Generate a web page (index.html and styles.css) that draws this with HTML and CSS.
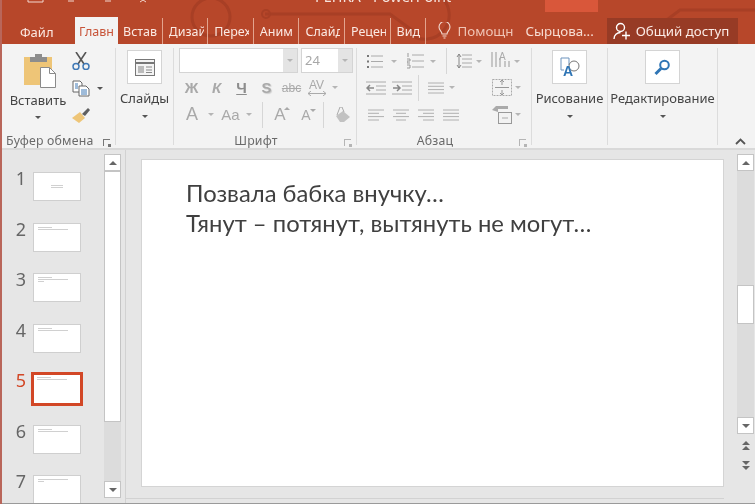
FILE: index.html
```html
<!DOCTYPE html>
<html lang="ru">
<head>
  <meta charset="UTF-8">
  <title>РЕПКА - PowerPoint</title>
  <link rel="stylesheet" href="styles.css">
</head>
<body>
  <svg class="defs" width="0" height="0">
    <symbol id="lines" viewBox="0 0 16 12"><path d="M0 1h16M0 4.300h16M0 7.600h16M0 11h16" stroke="currentColor" fill="none"/></symbol>
    <symbol id="lines-left" viewBox="0 0 16 12"><path d="M0 1h16M0 4.300h11M0 7.600h16M0 11h11" stroke="currentColor" fill="none"/></symbol>
    <symbol id="lines-center" viewBox="0 0 16 12"><path d="M0 1h16M3 4.300h10M0 7.600h16M3 11h10" stroke="currentColor" fill="none"/></symbol>
    <symbol id="lines-right" viewBox="0 0 16 12"><path d="M0 1h16M5 4.300h11M0 7.600h16M5 11h11" stroke="currentColor" fill="none"/></symbol>
  </svg>

  <div class="app">
    <header class="titlebar">
      <svg class="title-art" width="755" height="44" viewBox="0 0 755 44">
        <circle cx="211" cy="17" r="19" fill="none" stroke="#a83f25" stroke-width="3"/>
        <path d="M265 14h125l30 22M440 -4a20 20 0 0 1 -30 38M640 40l40-30h75" fill="none" stroke="#a83f25" stroke-width="3"/>
        <circle cx="266" cy="14" r="4" fill="none" stroke="#a83f25" stroke-width="2"/>
        <path d="M28 0v2h15V0M68 1h6M105 1h6M140 2l3-2 3 2" fill="none" stroke="#f3d9d0"/>
      </svg>
      <span class="title-text">РЕПКА - PowerPoint</span>
      <span class="title-close"></span>
    </header>

    <nav class="tabs">
      <span class="tab-file">Файл</span>
      <span class="tab-active">Главн</span>
      <span class="tab"><span>Встав</span></span>
      <span class="tab"><span>Дизай</span></span>
      <span class="tab"><span>Перех</span></span>
      <span class="tab"><span>Аним</span></span>
      <span class="tab"><span>Слайд</span></span>
      <span class="tab"><span>Рецен</span></span>
      <span class="tab tab-short"><span>Вид</span></span>
      <span class="tab-help">
        <svg width="13" height="17" viewBox="0 0 13 17"><path d="M4 12c0-3-3-3.500-3-7a5.500 5.500 0 0 1 11 0c0 3.500-3 4-3 7zM4.500 14h4M5.500 16h2" fill="none" stroke="#f3d9d0" stroke-width="1.100"/></svg>
        Помощн
      </span>
      <span class="tab-user">Сырцова...</span>
      <span class="tab-share">
        <svg width="18" height="18" viewBox="0 0 18 18"><circle cx="7.500" cy="5.500" r="4" fill="none" stroke="#fff" stroke-width="1.400"/><path d="M1 17c0-4 3-6.500 6.500-6.500M9 13.500h8M13 9.500v8" fill="none" stroke="#fff" stroke-width="1.400"/></svg>
        Общий доступ
      </span>
    </nav>

    <section class="ribbon">
      <div class="group group-clipboard">
        <div class="group-body clipboard">
          <div class="paste">
            <svg class="paste-icon" width="32" height="34" viewBox="0 0 32 34">
              <rect x="0" y="3" width="28" height="28" fill="#eec577"/>
              <rect x="6" y="3" width="17" height="5" fill="#8d8d8d"/>
              <rect x="11" y="0" width="7" height="4" fill="#8d8d8d"/>
              <path d="M16.500 13.500h9l6 6v14h-15z" fill="#fff" stroke="#8a8a8a"/>
              <path d="M25.500 13.500v6h6" fill="none" stroke="#8a8a8a"/>
            </svg>
            <span class="big-label">Вставить</span>
            <i class="caret caret-dark"></i>
          </div>
          <div class="clip-tools">
            <svg width="18" height="18" viewBox="0 0 18 18"><path d="M4 0l8 12M14 0L6 12" stroke="#555" stroke-width="1.600"/><circle cx="4" cy="14.500" r="3" fill="none" stroke="#3f78b5" stroke-width="1.500"/><circle cx="14" cy="14.500" r="3" fill="none" stroke="#3f78b5" stroke-width="1.500"/></svg>
            <span class="clip-copy">
              <svg width="18" height="17" viewBox="0 0 18 17"><path d="M1 1h7l2 2v9H1z" fill="#fff" stroke="#666"/><path d="M7 6h7l3 3v7H7z" fill="#fff" stroke="#666"/><path d="M9 10h6M9 12h6M9 14h6M3 4h3M3 6h3M3 8h3" stroke="#3f78b5"/></svg>
              <i class="caret caret-dark"></i>
            </span>
            <svg width="19" height="17" viewBox="0 0 19 17"><path d="M0 11l8-6 5 6-6 5z" fill="#eec577"/><path d="M10 7l6-6 2 2-5 6z" fill="#5f5f5f"/></svg>
          </div>
        </div>
        <div class="group-label">Буфер обмена<i class="launcher"></i></div>
      </div>

      <div class="group group-slides">
        <div class="group-body big-tool">
          <span class="big-box">
            <svg width="20" height="17" viewBox="0 0 20 17"><rect x=".5" y=".5" width="19" height="16" fill="#f4f4f4" stroke="#777"/><path d="M0 4h20" stroke="#777" stroke-width="2"/><rect x="3" y="7" width="6" height="7" fill="#bbb"/><path d="M11 8h6M11 11h6M11 13.500h6" stroke="#888"/></svg>
          </span>
          <span class="big-label">Слайды</span>
          <i class="caret caret-dark"></i>
        </div>
        <div class="group-label"></div>
      </div>

      <div class="group group-font">
        <div class="group-body font-tools">
          <div class="font-inputs">
            <span class="combo combo-name"><i class="combo-arrow"><i class="caret"></i></i></span>
            <span class="combo combo-size"><b>24</b><i class="combo-arrow"><i class="caret"></i></i></span>
          </div>
          <div class="tool-row font-row-a">
            <b class="fmt fmt-w">Ж</b>
            <b class="fmt fmt-w fmt-i">К</b>
            <b class="fmt fmt-w fmt-u">Ч</b>
            <b class="fmt fmt-w fmt-s">S</b>
            <span class="fmt fmt-w fmt-abc">abc</span>
            <span class="fmt fmt-w fmt-av">AV<svg width="20" height="5" viewBox="0 0 20 5"><path d="M1 2.500h18M4 0L1 2.500 4 5M16 0l3 2.500L16 5" fill="none" stroke="#aaa"/></svg></span>
            <i class="caret ml-3"></i>
          </div>
          <div class="tool-row font-row-b">
            <span class="fmt fmt-big">A</span>
            <i class="caret ml-3"></i>
            <span class="fmt fmt-aa">Aa</span>
            <i class="caret ml-6"></i>
            <i class="sep ml-10"></i>
            <span class="fmt fmt-grow">A</span>
            <span class="fmt fmt-shrink">A</span>
            <i class="sep ml-10"></i>
            <svg class="ml-10" width="17" height="16" viewBox="0 0 17 16"><path d="M2 9l7-5 7 6-6 5H6z" fill="#c2c2c2"/><path d="M3 8L6 0h2l2 5" fill="none" stroke="#aaa"/></svg>
          </div>
        </div>
        <div class="group-label group-label-shift">Шрифт<i class="launcher launcher-light"></i></div>
      </div>

      <div class="group group-para">
        <div class="group-body para-tools">
          <div class="tool-row para-row-a">
            <svg class="ml-1" width="16" height="15" viewBox="0 0 16 15"><path d="M4 2h12M4 7.500h12M4 13h12" stroke="#aaa"/><path d="M0 2h2M0 7.500h2M0 13h2" stroke="#777" stroke-width="2"/></svg>
            <i class="caret ml-8"></i>
            <svg class="ml-10" width="17" height="16" viewBox="0 0 17 16"><path d="M5 2h12M5 8h12M5 14h12" stroke="#aaa"/><path d="M1 0v4M0 6h3v2H0v2h3M0 12h3v3H0" fill="none" stroke="#999"/></svg>
            <i class="caret ml-6"></i>
            <i class="sep ml-10"></i>
            <svg class="ml-9" width="16" height="16" viewBox="0 0 16 16"><path d="M6 2h10M6 6h10M6 10h10M6 14h10" stroke="#aaa"/><path d="M3 1v14M1 4l2-3 2 3M1 12l2 3 2-3" fill="none" stroke="#888"/></svg>
            <i class="caret ml-4"></i>
            <svg class="ml-9" width="20" height="18" viewBox="0 0 20 18"><path d="M1 0v15M5 0v15M9 6v9M14 9v6M18 9v6" stroke="#999"/><text x="8" y="8" font-size="10" fill="#aaa" font-family="Liberation Sans">A</text></svg>
            <i class="caret ml-3"></i>
          </div>
          <div class="tool-row para-row-b">
            <svg width="20" height="14" viewBox="0 0 20 14"><path d="M0 1h20M10 5h10M10 9h10M0 13h20" stroke="#aaa"/><path d="M8 7H1M4 4L1 7l3 3" fill="none" stroke="#888" stroke-width="1.500"/></svg>
            <svg class="ml-6" width="20" height="14" viewBox="0 0 20 14"><path d="M0 1h20M10 5h10M10 9h10M0 13h20" stroke="#aaa"/><path d="M1 7h7M5 4l3 3-3 3" fill="none" stroke="#888" stroke-width="1.500"/></svg>
            <i class="sep ml-6"></i>
            <svg class="ml-9" width="16" height="12"><use href="#lines"/></svg>
            <i class="caret ml-5"></i>
            <svg class="ml-37" width="20" height="19" viewBox="0 0 20 19"><rect x=".5" y="1.500" width="19" height="16" fill="none" stroke="#aaa" stroke-dasharray="2 1"/><path d="M10 2v5M8 4l2-2 2 2M10 17v-5M8 15l2 2 2-2M3 9.500h14" fill="none" stroke="#999"/></svg>
            <i class="caret ml-3"></i>
          </div>
          <div class="tool-row para-row-c">
            <svg class="ml-2" width="16" height="12"><use href="#lines-left"/></svg>
            <svg class="ml-9" width="16" height="12"><use href="#lines-center"/></svg>
            <svg class="ml-9" width="16" height="12"><use href="#lines-right"/></svg>
            <svg class="ml-9" width="16" height="12"><use href="#lines"/></svg>
            <svg class="ml-33" width="20" height="19" viewBox="0 0 20 19"><path d="M0 5l4-4h12v3H6v3z" fill="#aaa"/><rect x="6.500" y="7.500" width="13" height="11" fill="#f2f2f2" stroke="#999"/><path d="M10 13h6" stroke="#aaa"/></svg>
            <i class="caret ml-3"></i>
          </div>
        </div>
        <div class="group-label group-label-shift">Абзац<i class="launcher launcher-light"></i></div>
      </div>

      <div class="group group-draw">
        <div class="group-body big-tool">
          <span class="big-box">
            <svg width="20" height="20" viewBox="0 0 20 20"><path d="M9 8V1H1v12h3" fill="none" stroke="#6d93bd"/><circle cx="14" cy="9" r="5" fill="none" stroke="#777"/><text x="3" y="19" font-size="14" font-weight="bold" fill="#2f75b5" font-family="Liberation Sans">A</text></svg>
          </span>
          <span class="big-label">Рисование</span>
          <i class="caret caret-dark"></i>
        </div>
        <div class="group-label"></div>
      </div>

      <div class="group group-edit">
        <div class="group-body big-tool">
          <span class="big-box">
            <svg width="17" height="17" viewBox="0 0 17 17"><circle cx="10.500" cy="6" r="4.300" fill="none" stroke="#2f75b5" stroke-width="2"/><path d="M7 9.500L1.500 15" stroke="#2f75b5" stroke-width="3"/></svg>
          </span>
          <span class="big-label">Редактирование</span>
          <i class="caret caret-dark"></i>
        </div>
        <div class="group-label"></div>
      </div>

      <div class="group-collapse">
        <svg width="11" height="7" viewBox="0 0 11 7"><path d="M1 6l4.500-4.500L10 6" fill="none" stroke="#555" stroke-width="1.800"/></svg>
      </div>
    </section>

    <main class="workspace">
      <aside class="thumbs">
        <div class="thumb-list">
          <div class="thumb-row"><span class="thumb-num">1</span><div class="thumb thumb-title"><i></i><i></i></div></div>
          <div class="thumb-row"><span class="thumb-num">2</span><div class="thumb"><i class="s"></i><i></i></div></div>
          <div class="thumb-row"><span class="thumb-num">3</span><div class="thumb"><i class="s"></i><i></i><i class="xs"></i></div></div>
          <div class="thumb-row"><span class="thumb-num">4</span><div class="thumb"><i class="s"></i><i></i></div></div>
          <div class="thumb-row thumb-current"><span class="thumb-num">5</span><div class="thumb"><i class="s"></i><i></i></div></div>
          <div class="thumb-row"><span class="thumb-num">6</span><div class="thumb"><i class="s"></i><i></i></div></div>
          <div class="thumb-row"><span class="thumb-num">7</span><div class="thumb"><i></i><i class="xs"></i></div></div>
        </div>
        <div class="scrollbar scrollbar-left">
          <span class="sb-btn"><i class="arrow-up"></i></span>
          <span class="sb-thumb"></span>
          <span class="sb-track"></span>
          <span class="sb-btn"><i class="arrow-down"></i></span>
        </div>
      </aside>

      <section class="editor">
        <div class="slide">
          <p>Позвала бабка внучку…</p>
          <p>Тянут – потянут, вытянуть не могут…</p>
        </div>
      </section>

      <div class="scrollbar scrollbar-right">
        <span class="sb-btn"><i class="arrow-up"></i></span>
        <span class="sb-track sb-track-top"></span>
        <span class="sb-thumb"></span>
        <span class="sb-track sb-track-bottom"></span>
        <span class="sb-btn"><i class="arrow-down"></i></span>
        <span class="sb-page"><i class="arrow-up"></i><i class="arrow-up"></i></span>
        <span class="sb-page"><i class="arrow-down"></i><i class="arrow-down"></i></span>
      </div>
    </main>
  </div>
</body>
</html>
```

FILE: styles.css
```css
* {
  box-sizing: border-box;
}
body {
  margin: 0;
  font-family: "Noto Sans", "Open Sans", sans-serif;
  background-color: #e6e6e6;
  overflow: hidden;
}
i {
  display: block;
  font-style: normal;
}
svg {
  display: block;
  flex: none;
}
.defs {
  position: absolute;
}
.app {
  width: 755px;
  height: 504px;
  display: flex;
  flex-direction: column;
  border-left: 2px solid #b9665a;
  background-color: #b7472a;
  position: relative;
  overflow: hidden;
  filter: blur(0.35px);
}

/* spacing helpers for the ribbon rows */
.ml-1 { margin-left: 1px; }
.ml-2 { margin-left: 2px; }
.ml-3 { margin-left: 3px; }
.ml-4 { margin-left: 4px; }
.ml-5 { margin-left: 5px; }
.ml-6 { margin-left: 6px; }
.ml-8 { margin-left: 8px; }
.ml-9 { margin-left: 9px; }
.ml-10 { margin-left: 10px; }
.ml-33 { margin-left: 33px; }
.ml-37 { margin-left: 37px; }

/* title bar */
.titlebar {
  height: 17px;
  margin-left: -2px;
  position: relative;
  color: #f6e3dd;
  font-size: 14.500px;
}
.title-art {
  position: absolute;
  left: 0;
  top: 0;
}
.title-text {
  position: absolute;
  left: 315px;
  top: -14px;
  white-space: nowrap;
}
.title-close {
  position: absolute;
  left: 545px;
  top: 0;
  width: 53px;
  height: 12px;
  background-color: #d9573a;
}

/* tabs */
.tabs {
  height: 27px;
  margin-left: -2px;
  display: flex;
  align-items: center;
  color: #fbe9e3;
  font-size: 12.500px;
  position: relative;
}
.tab-file {
  width: 75px;
  padding-left: 20px;
  padding-top: 2px;
  font-size: 13px;
}
.tab-active {
  width: 43px;
  height: 27px;
  margin-right: -1px;
  padding-left: 4px;
  line-height: 29px;
  background-color: #f3f3f3;
  color: #c8553a;
  overflow: hidden;
  white-space: nowrap;
  position: relative;
}
.tab {
  width: 45.600px;
  height: 26px;
  padding-left: 6px;
  line-height: 28px;
  border-right: 1px solid #e3a48e;
  flex: none;
}
.tab span {
  display: block;
  width: 35px;
  overflow: hidden;
  white-space: nowrap;
}
.tab-short {
  width: 35px;
  padding-left: 6px;
}
.tab-help {
  display: flex;
  align-items: center;
  gap: 7px;
  margin-left: 12px;
  color: #f0c4b5;
  font-size: 13.300px;
}
.tab-user {
  margin-left: 12px;
  color: #f7dcd2;
  font-size: 13.300px;
}
.tab-share {
  display: flex;
  align-items: center;
  gap: 5px;
  width: 131px;
  height: 26px;
  margin-left: 13px;
  margin-top: 1px;
  padding-left: 6px;
  background-color: #973b25;
  color: #fbeae5;
  font-size: 13.300px;
}

/* ribbon */
.ribbon {
  height: 106px;
  background-color: #f3f3f3;
  display: flex;
  border-bottom: 2px solid #d9d9d9;
  position: relative;
  padding-top: 4px;
}
.group {
  display: flex;
  flex-direction: column;
  border-right: 1px solid #dcdcdc;
  margin-bottom: 3px;
}
.group-body {
  flex: none;
  height: 80px;
}
.group-label {
  height: 17px;
  font-size: 12.300px;
  color: #6a6a6a;
  text-align: center;
  line-height: 26px;
  position: relative;
  letter-spacing: .2px;
}
.group-label-shift {
  padding-right: 18px;
}
.launcher {
  position: absolute;
  right: 5px;
  top: 11px;
  width: 7px;
  height: 7px;
  border-left: 1px solid #777;
  border-top: 1px solid #777;
}
.launcher::after {
  content: "";
  position: absolute;
  right: -1px;
  bottom: -1px;
  width: 3px;
  height: 3px;
  background-color: #777;
}
.launcher-light {
  border-color: #b5b5b5;
}
.launcher-light::after {
  background-color: #b5b5b5;
}
.group-clipboard {
  width: 114px;
}
.group-clipboard .group-label {
  text-align: left;
  padding-left: 4px;
}
.group-slides {
  width: 58px;
}
.group-font {
  width: 183px;
}
.group-para {
  width: 175px;
}
.group-draw {
  width: 76px;
}
.group-edit {
  width: 110px;
}
.clipboard {
  display: flex;
}
.paste {
  width: 70px;
  display: flex;
  flex-direction: column;
  align-items: center;
  padding: 6px 0 0 2px;
}
.paste-icon {
  margin-left: 4px;
}
.paste .big-label {
  margin-top: 4px;
  margin-bottom: 7px;
}
.clip-tools {
  display: flex;
  flex-direction: column;
  align-items: flex-start;
  gap: 10px;
  padding-top: 4px;
}
.clip-copy {
  display: flex;
  align-items: center;
  gap: 7px;
}
.big-tool {
  display: flex;
  flex-direction: column;
  align-items: center;
  padding-top: 2px;
}
.big-box {
  width: 35px;
  height: 34px;
  background-color: #fff;
  border: 1px solid #d4d4d4;
  display: flex;
  align-items: center;
  justify-content: center;
}
.big-label {
  font-size: 13px;
  color: #444;
  line-height: 17px;
  white-space: nowrap;
}
.big-tool .big-label {
  margin-top: 6px;
  margin-bottom: 8px;
}
.caret {
  width: 0;
  height: 0;
  border-left: 3px solid transparent;
  border-right: 3px solid transparent;
  border-top: 3px solid #b5b5b5;
  flex: none;
}
.caret-dark {
  border-top-color: #555;
}

/* font group */
.font-tools {
  padding-left: 5px;
}
.font-inputs {
  display: flex;
  gap: 3px;
  height: 25px;
}
.combo {
  background-color: #fff;
  border: 1px solid #d4d4d4;
  display: flex;
  justify-content: flex-end;
  position: relative;
}
.combo-name {
  width: 119px;
}
.combo-size {
  width: 52px;
}
.combo-size b {
  position: absolute;
  left: 3px;
  top: 2px;
  font-size: 13px;
  font-weight: 400;
  color: #a8a8a8;
}
.combo-arrow {
  width: 14px;
  background-color: #e4e4e4;
  display: flex;
  align-items: center;
  justify-content: center;
}
.tool-row {
  display: flex;
  align-items: center;
}
.font-row-a {
  height: 27px;
  margin-top: 1px;
}
.font-row-b {
  height: 27px;
}
.fmt {
  color: #a9a9a9;
  font-family: "Liberation Sans", sans-serif;
  text-align: center;
  position: relative;
}
.fmt-w {
  width: 25px;
  font-size: 15px;
}
.fmt-i {
  font-style: italic;
}
.fmt-u {
  text-decoration: underline;
  color: #8d8d8d;
}
.fmt-s {
  text-shadow: 1px 1px 1px #ccc;
}
.fmt-abc {
  font-size: 12px;
  text-decoration: line-through;
}
.fmt-av {
  font-size: 12px;
  line-height: 11px;
}
.fmt-av svg {
  margin: 0 auto;
}
.fmt-big {
  font-size: 18px;
  width: 26px;
}
.fmt-aa {
  font-size: 15px;
  width: 19px;
  margin-left: 7px;
}
.fmt-grow {
  font-size: 17px;
  width: 14px;
  margin-left: 10px;
}
.fmt-shrink {
  font-size: 14px;
  width: 14px;
  margin-left: 12px;
}
.fmt-grow::after,
.fmt-shrink::after {
  content: "";
  position: absolute;
  right: -3px;
  top: 2px;
  border-left: 3px solid transparent;
  border-right: 3px solid transparent;
}
.fmt-grow::after {
  border-bottom: 3px solid #a9a9a9;
}
.fmt-shrink::after {
  border-top: 3px solid #a9a9a9;
}
.sep {
  width: 1px;
  height: 26px;
  background-color: #d6d6d6;
  flex: none;
}

/* paragraph group */
.para-tools {
  padding-left: 9px;
}
.para-row-a {
  height: 26px;
}
.para-row-b,
.para-row-c {
  height: 27px;
  color: #b0b0b0;
}
.group-collapse {
  position: absolute;
  left: 733px;
  top: 94px;
  z-index: 1;
}

/* bottom part */
.workspace {
  flex: 1;
  min-height: 0;
  display: flex;
  border-bottom: 1px solid #9a9a9a;
  background-color: #e6e6e6;
}
.thumbs {
  width: 124px;
  display: flex;
  border-right: 1px solid #d2d2d2;
  overflow: hidden;
  flex: none;
}
.thumb-list {
  width: 102px;
  padding-top: 23px;
  flex: none;
}
.thumb-row {
  height: 50.500px;
  display: flex;
  gap: 7px;
}
.thumb-num {
  width: 24px;
  margin-top: -2px;
  text-align: right;
  font-size: 18px;
  line-height: 14px;
  color: #666;
}
.thumb {
  width: 48px;
  height: 29px;
  margin-top: -1px;
  background-color: #fff;
  border: 1px solid #cfcfcf;
  padding: 3px 4px;
  display: flex;
  flex-direction: column;
  gap: 1px;
}
.thumb i {
  height: 1px;
  width: 30px;
  background-color: #d0d0d0;
}
.thumb i.s {
  width: 14px;
}
.thumb i.xs {
  width: 6px;
}
.thumb-title {
  align-items: center;
  justify-content: center;
}
.thumb-title i {
  width: 12px;
}
.thumb-current .thumb-num {
  color: #d24726;
}
.thumb-current .thumb {
  border: 3px solid #d24726;
  width: 52px;
  height: 34px;
  margin: -3px 0 0 -2px;
  padding: 2px 3px;
}
.scrollbar {
  width: 17px;
  display: flex;
  flex-direction: column;
  flex: none;
  margin-top: 4px;
  margin-bottom: 5px;
}
.sb-btn {
  height: 17px;
  background-color: #fff;
  border: 1px solid #c4c4c4;
  display: flex;
  align-items: center;
  justify-content: center;
  flex: none;
}
.sb-thumb {
  background-color: #fff;
  border: 1px solid #c4c4c4;
  flex: none;
}
.sb-track {
  background-color: #dcdcdc;
  flex: 1;
}
.scrollbar-left .sb-thumb {
  height: 251px;
}
.scrollbar-right {
  margin-left: 13px;
}
.scrollbar-right .sb-thumb {
  height: 39px;
}
.sb-track-top {
  flex: none;
  height: 114px;
}
.sb-track-bottom {
  flex: none;
  height: 93px;
}
.sb-page {
  display: flex;
  flex-direction: column;
  align-items: center;
  margin-top: 7px;
  gap: 1px;
  height: 13px;
}
.arrow-up,
.arrow-down {
  width: 0;
  height: 0;
  border-left: 4px solid transparent;
  border-right: 4px solid transparent;
}
.arrow-up {
  border-bottom: 4px solid #666;
}
.arrow-down {
  border-top: 4px solid #666;
}
.editor {
  width: 598px;
  padding: 9px 0 0 15px;
  margin-bottom: 4px;
  border-bottom: 1px solid #d2d2d2;
  flex: none;
}
.slide {
  width: 583px;
  height: 328px;
  background-color: #fff;
  border: 1px solid #d4d4d4;
  padding: 18px 44px;
  font-family: Lato, "Noto Sans", sans-serif;
  font-size: 23.800px;
  line-height: 30px;
  color: #404040;
}
.slide p {
  margin: 0;
}
```
